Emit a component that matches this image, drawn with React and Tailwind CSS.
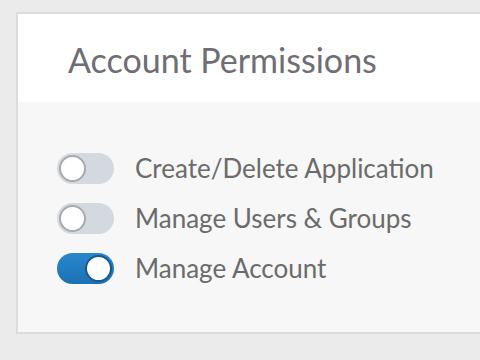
import React, { useState } from 'react';

function Toggle({ on, onClick }) {
  return (
    <button
      onClick={onClick}
      className={`relative w-[57px] h-[31px] rounded-full shrink-0 ${on ? 'bg-gradient-to-b from-[#2a86cc] to-[#1a72b4]' : 'bg-[#d3d9df]'}`}
    >
      <span
        className={`absolute top-[2px] w-[27px] h-[27px] rounded-full bg-white border-[2px] ${on ? 'left-[28px] border-[#17598c]' : 'left-[2px] border-[#a7a9ab]'}`}
      />
    </button>
  );
}

export default function App() {
  const [perms, setPerms] = useState([
    { label: 'Create/Delete Application', on: false },
    { label: 'Manage Users & Groups', on: false },
    { label: 'Manage Account', on: true },
  ]);

  const flip = (i) => setPerms(perms.map((p, j) => (j === i ? { ...p, on: !p.on } : p)));

  return (
    <div className="w-[480px] h-[360px] bg-[#ebebeb] pl-[16px] pt-[12px] overflow-hidden" style={{ fontFamily: 'Lato, sans-serif' }}>
      <div className="w-[480px] h-[322px] border-[2px] border-[#dcdcdc] flex flex-col">
        {/* header */}
        <div className="h-[88px] bg-white flex items-center pl-[50px] pt-[4px]">
          <h1 className="text-[34px] leading-none text-[#6e6e73]">Account Permissions</h1>
        </div>
        {/* body */}
        <div className="flex-1 bg-[#f7f7f7] pl-[39px] pt-[41px] flex flex-col">
          {perms.map((p, i) => (
            <div key={p.label} className="h-[50px] flex items-center gap-[21px]">
              <Toggle on={p.on} onClick={() => flip(i)} />
              <span className="text-[26px] leading-none text-[#6b6b6b]">{p.label}</span>
            </div>
          ))}
        </div>
      </div>
    </div>
  );
}
